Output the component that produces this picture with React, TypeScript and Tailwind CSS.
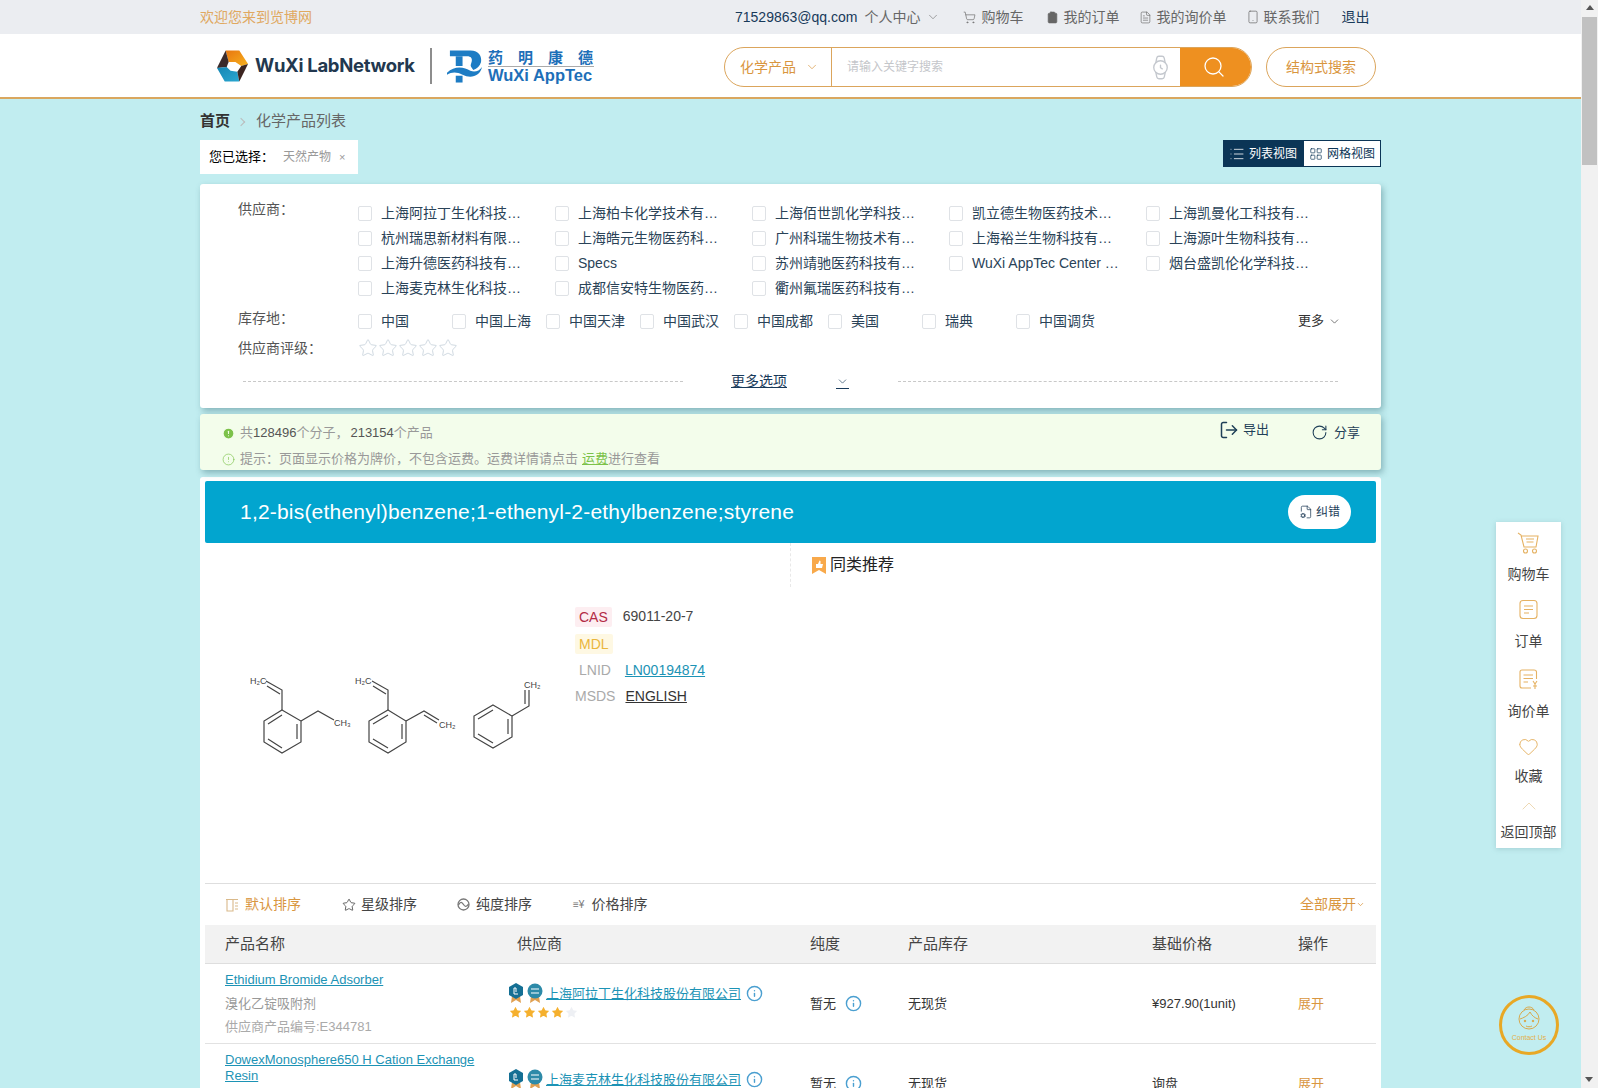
import React from 'react';
import {
  AlertCircle,
  ChevronDown,
  ChevronUp,
  Clipboard,
  FileCog,
  FileText,
  Heart,
  Info,
  LayoutGrid,
  List,
  LogOut,
  RotateCw,
  Search,
  ShoppingCart,
  Smartphone,
  Star,
  Watch,
} from 'lucide-react';

const suppliers = [
  '上海阿拉丁生化科技…',
  '上海柏卡化学技术有…',
  '上海佰世凯化学科技…',
  '凯立德生物医药技术…',
  '上海凯曼化工科技有…',
  '杭州瑞思新材料有限…',
  '上海皓元生物医药科…',
  '广州科瑞生物技术有…',
  '上海裕兰生物科技有…',
  '上海源叶生物科技有…',
  '上海升德医药科技有…',
  'Specs',
  '苏州靖驰医药科技有…',
  'WuXi AppTec Center …',
  '烟台盛凯伦化学科技…',
  '上海麦克林生化科技…',
  '成都信安特生物医药…',
  '衢州氟瑞医药科技有…',
];

const places = ['中国', '中国上海', '中国天津', '中国武汉', '中国成都', '美国', '瑞典', '中国调货'];

const Box = () => (
  <span className="inline-block w-[14px] h-[15px] shrink-0 rounded-[2px] border border-[#dfe2e6] bg-white" />
);

const Logo = () => (
  <div className="flex items-center w-[400px] pl-4 whitespace-nowrap">
    <svg width="33" height="34" viewBox="0 0 34 34" className="shrink-0">
      <defs>
        <linearGradient id="lo" x1="0" y1="0" x2="1" y2="1">
          <stop offset="0" stopColor="#e8760f" />
          <stop offset="1" stopColor="#f7b21f" />
        </linearGradient>
        <linearGradient id="lb" x1="0" y1="0" x2="1" y2="1">
          <stop offset="0" stopColor="#1586b4" />
          <stop offset="1" stopColor="#2aa7d0" />
        </linearGradient>
      </defs>
      <path d="M10 1 L24 1 L33 15 L26 17 L20 13 L13 13 Z" fill="url(#lo)" />
      <path d="M1 19 L10 1 L13 13 L11 18 Z" fill="#3a2a2a" />
      <path d="M1 19 L11 18 L15 22 L22 23 L24 33 L9 33 Z" fill="url(#lb)" />
      <path d="M22 23 L26 17 L33 15 L24 33 Z" fill="#3c2420" />
    </svg>
    <span className="ml-[6px] w-[160px] text-[18.5px] font-bold tracking-[-0.3px] text-[#22384f] [font-family:Inter,sans-serif]">
      WuXi LabNetwork
    </span>
    <span className="ml-[15px] w-[2px] h-[36px] bg-[#8d8d8d]" />
    <svg width="35" height="34" viewBox="0 0 36 34" className="ml-[15px] shrink-0">
      <path d="M3 1 H24 C33 1 36 7 35 13 C34 17 31 20 27 21 C24 17 24 17 25 14 C27 9 24 7 21 7 H3 Z" fill="#1d7cc4" />
      <path d="M9 7 H16 V17 H9 Z" fill="#1d7cc4" />
      <path d="M0 24 C8 16 18 18 24 22 C29 24 33 22 36 18 C34 28 24 30 16 26 C10 23 5 23 0 26 Z" fill="#1d7cc4" />
      <path d="M9 27 H16 V34 H9 Z" fill="#1d7cc4" />
    </svg>
    <div className="ml-[6px] flex flex-col w-[106px]">
      <span className="h-[17px] text-[15px] leading-[17px] tracking-[15px] text-[#1d6fb8] font-bold [font-family:'Noto_Sans_CJK_SC',sans-serif]">
        药明康德
      </span>
      <span className="mt-[1px] border-t border-[#aaa] text-[16.5px] leading-[17px] font-bold text-[#1d6fb8] [font-family:'Liberation_Sans',sans-serif]">
        WuXi AppTec
      </span>
    </div>
  </div>
);

const Molecules = () => (
  <svg width="310" height="100" viewBox="240 665 310 100" fill="none" stroke="#444" strokeWidth="1.2">
    <path d="M282 708 L301 719 L301 740 L282 751 L264 740 L264 719 Z" />
    <path d="M282 713 L268 722 M297 722 L297 737 M282 746 L268 737" />
    <path d="M282 708 L282 688 L266 679 M280 692 L267 684" />
    <path d="M301 719 L318 709 L334 718" />
    <path d="M388 708 L406 719 L406 740 L388 751 L369 740 L369 719 Z" />
    <path d="M388 713 L373 722 M402 722 L402 737 M388 746 L373 737" />
    <path d="M388 708 L388 688 L372 679 M386 692 L373 684" />
    <path d="M406 719 L424 709 L439 718 M424 713 L437 721" />
    <path d="M493 703 L512 714 L512 735 L493 746 L474 735 L474 714 Z" />
    <path d="M493 708 L478 717 M508 717 L508 732 M493 741 L478 732" />
    <path d="M512 714 L529 704 L529 688 M525 702 L525 688" />
    <g fill="#444" stroke="none" fontSize="9" fontFamily="Liberation Sans, sans-serif">
      <text x="250" y="682">H₂C</text>
      <text x="334" y="724">CH₃</text>
      <text x="355" y="682">H₂C</text>
      <text x="439" y="726">CH₂</text>
      <text x="524" y="686">CH₂</text>
    </g>
  </svg>
);

const Medals = () => (
  <span className="flex gap-[3px] shrink-0">
    <svg width="16" height="21" viewBox="0 0 16 21">
      <path d="M4 13 L3 20 L8 17 L13 20 L12 13 Z" fill="#e0a052" />
      <path d="M8 0 L15 4 L15 12 L8 16 L1 12 L1 4 Z" fill="#146f94" />
      <path d="M6 5 V11 H10 M6 5 H8 V9" stroke="#fff" fill="none" strokeWidth="1" />
    </svg>
    <svg width="16" height="21" viewBox="0 0 16 21">
      <path d="M4 13 L3 20 L8 17 L13 20 L12 13 Z" fill="#e0a052" />
      <circle cx="8" cy="8" r="7.5" fill="#2d8aa8" />
      <path d="M4 6 H12 M12 10 H4" stroke="#fff" strokeWidth="1.2" />
    </svg>
  </span>
);

const RatingStars = () => (
  <span className="flex gap-[1px]">
    {[0, 1, 2, 3, 4].map((i) => (
      <Star
        key={i}
        size={13}
        strokeWidth={0}
        className={i < 4 ? 'fill-[#f5b02e]' : 'fill-[#eef0f4]'}
      />
    ))}
  </span>
);

const SideCart = () => (
  <svg width="23" height="22" viewBox="0 0 23 22" fill="none" stroke="#e5b263" strokeWidth="1.1">
    <path d="M1 1 L4 3 L7 15 H19 L21 4 H4" />
    <path d="M9 7 H17 M9.5 10 H16.5" />
    <circle cx="8.5" cy="19" r="2" />
    <circle cx="17.5" cy="19" r="2" />
  </svg>
);

const SideOrder = () => (
  <svg width="21" height="21" viewBox="0 0 21 21" fill="none" stroke="#e5b263" strokeWidth="1.1">
    <rect x="2" y="1.5" width="17" height="18" rx="3" />
    <path d="M6 7 H15 M6 10.5 H15 M6 14 H11" />
  </svg>
);

const SideQuote = () => (
  <svg width="22" height="22" viewBox="0 0 22 22" fill="none" stroke="#e5b263" strokeWidth="1.1">
    <path d="M13 20 H4 C2.5 20 2 19 2 18 V4 C2 2.5 3 2 4 2 H16 C18 2 18.5 3 18.5 4 V11" />
    <path d="M5.5 7 H15 M5.5 10.5 H15 M5.5 14 H10" />
    <path d="M15 13 L17 16 L19 13 M17 16 V21 M15 18 H19" />
  </svg>
);

const SortColumns = () => (
  <svg width="14" height="14" viewBox="0 0 14 14" fill="none" stroke="#d9b98a" strokeWidth="1.1" className="mr-[6px]">
    <path d="M1 1.5 H13 M2 1.5 V13 H8 V1.5 M10 5 H13 M10 8 H13 M10 11 H13" />
  </svg>
);

const SortPurity = () => (
  <svg width="13" height="13" viewBox="0 0 13 13" fill="none" stroke="#777" strokeWidth="1.3" className="ml-[40px] mr-[6px]">
    <circle cx="6.5" cy="6.5" r="5.5" />
    <path d="M1.5 7 C3.5 3 5 4 6.5 6.5 C8 9 9.5 9 11.5 6" />
  </svg>
);

const Row = (props: {
  name: React.ReactNode;
  supplier: string;
  stock: string;
  price: string;
  top: string;
  children?: React.ReactNode;
}) => (
  <div className="flex h-[80px] border-b border-[#e2e2e2] text-[13px] text-[#333]">
    <div className="w-[312px] pl-5 pt-[8px]">
      <a className="block w-[250px] text-[13px] leading-[16px] text-[#1c93b5] underline">{props.name}</a>
      {props.children}
    </div>
    <div className={`w-[293px] -ml-[9px] mr-[9px] ${props.top}`}>
      <div className="flex items-center">
        <Medals />
        <a className="ml-[3px] text-[13px] leading-[18px] text-[#1c93b5] underline whitespace-nowrap">{props.supplier}</a>
        <Info size={17} className="ml-[5px] text-[#4a9fd0]" />
      </div>
      <div className="mt-[2px] ml-[1px]">
        <RatingStars />
      </div>
    </div>
    <div className="w-[98px] flex items-center">
      暂无
      <Info size={17} className="ml-[9px] text-[#4a9fd0]" />
    </div>
    <div className="w-[244px] flex items-center">{props.stock}</div>
    <div className="w-[146px] flex items-center">{props.price}</div>
    <div className="flex items-center text-[#d9963f]">展开</div>
  </div>
);

const App = () => {
  return (
    <div className="relative flex h-screen overflow-hidden bg-[#c1edf0] text-[14px] [font-family:'Liberation_Sans','Noto_Sans_CJK_SC',sans-serif]">
      <div className="flex-1 min-w-0">
        {/* top bar */}
        <div className="h-[34px] bg-[#ebedf1]">
          <div className="mx-auto w-[1181px] h-full flex items-center text-[#666] whitespace-nowrap">
            <span className="text-[#e0a860]">欢迎您来到览博网</span>
            <span className="ml-[423px] text-[#183a5a]">71529863@qq.com</span>
            <span className="ml-[7px]">个人中心</span>
            <ChevronDown size={14} strokeWidth={1} className="ml-[6px]" />
            <ShoppingCart size={13} className="ml-[23px]" strokeWidth={1.2} />
            <span className="ml-[5px]">购物车</span>
            <Clipboard size={13} className="ml-[23px] fill-[#666]" strokeWidth={1.2} />
            <span className="ml-[4px]">我的订单</span>
            <FileText size={13} className="ml-[20px]" strokeWidth={1.2} />
            <span className="ml-[4px]">我的询价单</span>
            <Smartphone size={14} className="ml-[20px]" strokeWidth={1.2} />
            <span className="ml-[3px]">联系我们</span>
            <span className="ml-[22px] text-[#183a5a]">退出</span>
          </div>
        </div>

        {/* header */}
        <div className="h-[65px] bg-white border-b-2 border-[#d9a75f]">
          <div className="mx-auto w-[1181px] h-full flex items-center">
            <Logo />
            <div className="ml-[124px] mt-[3px] flex h-[40px] w-[528px] rounded-full border border-[#dba55c] overflow-hidden">
              <div className="w-[107px] flex items-center pl-[15px] text-[#d9963f] border-r border-[#dba55c]">
                化学产品
                <ChevronDown size={14} strokeWidth={1.2} className="ml-[9px]" />
              </div>
              <div className="flex-1 flex items-center pl-[15px] text-[12px] text-[#c4c6ca]">
                请输入关键字搜索
                <Watch size={27} strokeWidth={1.2} className="ml-auto mr-[6px] text-[#c4c8ce]" />
              </div>
              <div className="w-[71px] bg-[#ee9020] flex items-center justify-center">
                <Search size={24} strokeWidth={1.3} className="text-white -ml-[4px]" />
              </div>
            </div>
            <div className="ml-[14px] mt-[3px] h-[40px] w-[110px] rounded-full border border-[#dba55c] flex items-center justify-center text-[#d9963f]">
              结构式搜索
            </div>
          </div>
        </div>

        <div className="mx-auto w-[1181px]">
          {/* breadcrumb */}
          <div className="h-[41px] pt-[4px] flex items-center text-[#666] text-[15px]">
            <span className="font-bold text-[#333]">首页</span>
            <span className="ml-[8px] w-[6px] h-[6px] border-t border-r border-[#bbb] rotate-45" />
            <span className="ml-[12px]">化学产品列表</span>
          </div>

          <div className="flex justify-between h-[44px]">
            <div className="flex items-center h-[34px] w-[158px] pl-[9px] bg-white text-[13px] text-black">
              您已选择：
              <span className="ml-[9px] text-[12px] text-[#999]">天然产物</span>
              <span className="ml-[8px] text-[11px] text-[#999]">×</span>
            </div>
            <div className="flex h-[27px] w-[158px] border border-[#0b3556] text-[12px]">
              <div className="w-[80px] bg-[#0b3556] text-white flex items-center pl-[5px] whitespace-nowrap">
                <List size={16} strokeWidth={1.2} className="mr-[4px]" />
                列表视图
              </div>
              <div className="flex-1 bg-white text-[#0b3556] flex items-center pl-[5px] whitespace-nowrap">
                <LayoutGrid size={14} strokeWidth={1.2} className="mr-[4px]" />
                网格视图
              </div>
            </div>
          </div>

          {/* filter */}
          <div className="h-[224px] bg-white rounded-[3px] shadow-[2px_3px_6px_rgba(60,110,120,0.45)] pt-[16px] text-[#2a4358]">
            <div className="flex">
              <div className="w-[158px] pl-[38px] text-[#555] leading-[18px] shrink-0">供应商：</div>
              <div className="grid grid-cols-[197px_197px_197px_197px_197px] -mt-[2px]">
                {suppliers.map((s) => (
                  <div key={s} className="flex items-center h-[25px] mt-[3px] -mb-[3px] whitespace-nowrap">
                    <Box />
                    <span className="ml-[9px]">{s}</span>
                  </div>
                ))}
              </div>
            </div>
            <div className="flex items-center h-[24px] mt-[11px]">
              <div className="w-[158px] pl-[38px] text-[#555] -mt-[6px]">库存地：</div>
              {places.map((p) => (
                <div key={p} className="flex items-center w-[94px] whitespace-nowrap">
                  <Box />
                  <span className="ml-[9px]">{p}</span>
                </div>
              ))}
              <div className="flex items-center ml-auto mr-[40px] text-[13px] text-[#333]">
                更多
                <ChevronDown size={13} strokeWidth={1.2} className="ml-[4px]" />
              </div>
            </div>
            <div className="flex items-center h-[24px] mt-[3px]">
              <div className="w-[158px] pl-[38px] text-[#555]">供应商评级：</div>
              <div className="flex">
                {[0, 1, 2, 3, 4].map((i) => (
                  <Star key={i} size={20} strokeWidth={1.1} className="text-[#ccd5de]" />
                ))}
              </div>
            </div>
            <div className="flex items-center mt-[11px] pl-[43px]">
              <span className="w-[440px] border-t border-dashed border-[#c8c8c8]" />
              <span className="ml-[48px] underline text-[#183a5a]">更多选项</span>
              <span className="ml-[49px] border-b border-[#183a5a]">
                <ChevronDown size={13} strokeWidth={1.2} className="text-[#183a5a]" />
              </span>
              <span className="ml-[49px] w-[440px] border-t border-dashed border-[#c8c8c8]" />
            </div>
          </div>

          {/* result summary */}
          <div className="relative mt-[6px] h-[56px] bg-[#f3fdeb] rounded-[3px] shadow-[2px_3px_6px_rgba(60,110,120,0.45)] pl-[22px] pt-[7px] text-[13px] text-[#999]">
            <div className="flex items-center h-[24px]">
              <AlertCircle size={13} className="fill-[#7cc24a] text-[#f3fdeb] mr-[5px]" />
              共<span className="text-[#555]">128496</span>个分子，
              <span className="ml-[2px] text-[#555]">213154</span>个产品
            </div>
            <div className="flex items-center h-[24px] mt-[2px]">
              <AlertCircle size={13} strokeWidth={1.2} className="text-[#7cc24a] mr-[5px]" />
              提示：页面显示价格为牌价，不包含运费。运费详情请点击
              <span className="ml-[4px] text-[#7cc24a] underline">运费</span>进行查看
            </div>
            <div className="absolute right-[112px] top-[6px] flex items-center text-[#1f4058]">
              <LogOut size={20} strokeWidth={1.8} className="mr-[4px]" />
              导出
            </div>
            <div className="absolute right-[21px] top-[9px] flex items-center text-[#1f4058]">
              <RotateCw size={17} strokeWidth={1.5} className="mr-[6px]" />
              分享
            </div>
          </div>

          {/* product card */}
          <div className="mt-[7px] bg-white rounded-[3px] px-[5px] pt-[4px] pb-[40px]">
            <div className="flex items-center justify-between h-[62px] rounded-[2px] bg-[#02a5cf] pl-[35px] pr-[25px]">
              <span className="text-[21px] tracking-[0.2px] text-white whitespace-nowrap">
                1,2-bis(ethenyl)benzene;1-ethenyl-2-ethylbenzene;styrene
              </span>
              <span className="flex items-center justify-center w-[63px] h-[34px] rounded-full bg-white text-[12px] text-[#24405a]">
                <FileCog size={14} strokeWidth={1.3} className="mr-[3px]" />
                纠错
              </span>
            </div>

            <div className="relative h-[341px] border-b border-[#dedede]">
              <span className="absolute left-[585px] top-0 h-[44px] border-l border-dashed border-[#e8e8e8]" />
              <div className="absolute left-[607px] top-[10px] flex items-center text-[16px] text-[#222]">
                <svg width="14" height="17" viewBox="0 0 14 17" className="mr-[4px]">
                  <path d="M0 0 H14 V17 L7 13 L0 17 Z" fill="#f8a94b" />
                  <path d="M4 7 H6 L7.5 3.5 L8.5 4 V7 H11 L10 11 H4 Z" fill="#fff" />
                </svg>
                同类推荐
              </div>
              <div className="absolute left-[35px] top-[124px]">
                <Molecules />
              </div>
              <div className="absolute left-[370px] top-[60px] text-[14px] text-[#444]">
                <div className="flex items-center h-[27px]">
                  <span className="px-[4px] h-[20px] leading-[20px] rounded-[2px] bg-[#fdeef1] text-[#b32b45]">CAS</span>
                  <span className="ml-[11px]">69011-20-7</span>
                </div>
                <div className="flex items-center h-[27px]">
                  <span className="px-[4px] h-[20px] leading-[20px] rounded-[2px] bg-[#fef8e3] text-[#eab63c]">MDL</span>
                </div>
                <div className="flex items-center h-[26px] text-[#aaa]">
                  <span className="pl-[4px]">LNID</span>
                  <span className="ml-[14px] text-[#1c93b5] underline">LN00194874</span>
                </div>
                <div className="flex items-center h-[27px] text-[#aaa]">
                  <span>MSDS</span>
                  <span className="ml-[10px] text-[#333] underline">ENGLISH</span>
                </div>
              </div>
            </div>

            {/* sort */}
            <div className="flex items-center h-[41px] pl-[20px] pr-[11px] text-[#444]">
              <SortColumns />
              <span className="text-[#d9963f]">默认排序</span>
              <Star size={14} strokeWidth={1.4} className="ml-[41px] mr-[5px]" />
              星级排序
              <SortPurity />
              纯度排序
              <span className="ml-[41px] mr-[7px] text-[10px] text-[#777]">≡¥</span>
              价格排序
              <span className="ml-auto text-[#d9963f]">全部展开</span>
              <ChevronDown size={9} className="text-[#d9963f]" />
            </div>

            {/* table */}
            <div className="flex items-center h-[39px] bg-[#f2f2f2] border-b border-[#dedede] pl-5 text-[15px] text-[#444]">
              <span className="w-[292px]">产品名称</span>
              <span className="w-[293px]">供应商</span>
              <span className="w-[98px]">纯度</span>
              <span className="w-[244px]">产品库存</span>
              <span className="w-[146px]">基础价格</span>
              <span>操作</span>
            </div>

            <Row
              name="Ethidium Bromide Adsorber"
              supplier="上海阿拉丁生化科技股份有限公司"
              stock="无现货"
              price="¥927.90(1unit)"
              top="pt-[19px]"
            >
              <div className="mt-[5px] h-[22px] leading-[22px] text-[#999]">溴化乙锭吸附剂</div>
              <div className="mt-[1px] h-[22px] leading-[22px] text-[#aaa]">供应商产品编号:E344781</div>
            </Row>
            <Row
              name="DowexMonosphere650 H Cation Exchange Resin"
              supplier="上海麦克林生化科技股份有限公司"
              stock="无现货"
              price="询盘"
              top="pt-[25px]"
            />
          </div>
        </div>
      </div>

      {/* scrollbar */}
      <div className="relative w-[17px] shrink-0 bg-[#f1f1f1]">
        <div className="mx-auto mt-[5px] w-0 h-0 border-x-[4px] border-x-transparent border-b-[5px] border-b-[#555]" />
        <div className="absolute left-[1px] top-[17px] w-[15px] h-[148px] bg-[#c1c1c1]" />
        <div className="absolute left-[4px] bottom-[6px] w-0 h-0 border-x-[4px] border-x-transparent border-t-[5px] border-t-[#555]" />
      </div>

      {/* floating tools */}
      <div className="absolute left-[1496px] top-[522px] w-[65px] h-[326px] bg-white shadow-[0_1px_5px_rgba(120,160,170,0.4)] flex flex-col items-center pt-[10px] text-[14px] leading-[20px] text-[#444]">
        <SideCart />
        <span className="mt-[10px]">购物车</span>
        <div className="mt-[15px] h-[21px]"><SideOrder /></div>
        <span className="mt-[11px]">订单</span>
        <div className="mt-[17px] h-[22px]"><SideQuote /></div>
        <span className="mt-[11px]">询价单</span>
        <Heart size={21} strokeWidth={1.1} className="mt-[15px] text-[#e5b263]" />
        <span className="mt-[9px]">收藏</span>
        <ChevronUp size={24} strokeWidth={1} className="mt-[8px] text-[#eed9b4]" />
        <span className="mt-[4px] whitespace-nowrap">返回顶部</span>
      </div>

      <div className="absolute left-[1499px] top-[995px] w-[60px] h-[60px] rounded-full border-[3px] border-[#e8a825] flex flex-col items-center justify-center">
        <svg width="30" height="30" viewBox="0 0 30 30" fill="none" stroke="#d9a23c" strokeWidth="0.9" className="-mt-[4px]">
          <circle cx="15" cy="15" r="10" />
          <path d="M10 6 C12 2 18 2 20 6" />
          <path d="M6 15 C9 14 14 12 16 8 C18 12 21 14 24 15" />
          <circle cx="11" cy="17" r="0.8" fill="#d9a23c" />
          <circle cx="19" cy="17" r="0.8" fill="#d9a23c" />
          <path d="M12 22 C14 23 16 23 18 22" />
        </svg>
        <span className="text-[7px] leading-[8px] text-[#e3b04a] whitespace-nowrap">Contact Us</span>
      </div>
    </div>
  );
};

export default App;
